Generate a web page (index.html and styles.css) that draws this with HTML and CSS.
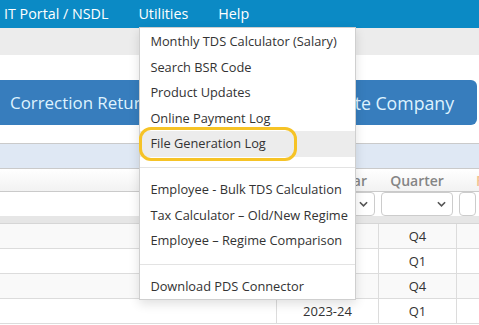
FILE: index.html
```html
<!DOCTYPE html>
<html lang="en">
<head>
<meta charset="utf-8">
<title>TDS Utilities</title>
<link rel="stylesheet" href="styles.css">
</head>
<body>
<nav class="topbar">
  <a class="nav-item brand">IT Portal / NSDL</a>
  <div class="nav-item has-menu">Utilities
    <ul class="dropdown">
      <li class="menu-item">Monthly TDS Calculator (Salary)</li>
      <li class="menu-item">Search BSR Code</li>
      <li class="menu-item">Product Updates</li>
      <li class="menu-item">Online Payment Log</li>
      <li class="menu-item active">File Generation Log<span class="ring"></span></li>
      <li class="divider"></li>
      <li class="menu-item">Employee - Bulk TDS Calculation</li>
      <li class="menu-item">Tax Calculator – Old/New Regime</li>
      <li class="menu-item">Employee – Regime Comparison</li>
      <li class="divider"></li>
      <li class="menu-item">Download PDS Connector</li>
    </ul>
  </div>
  <a class="nav-item">Help</a>
</nav>
<div class="subbar"></div>
<div class="actions">
  <button class="btn btn-left">Correction Return</button>
  <button class="btn btn-right">Create Company</button>
</div>
<section class="panel">
  <div class="panel-head"></div>
  <div class="row head-row">
    <div class="cell"></div>
    <div class="cell year-head">Financial Year</div>
    <div class="cell">Quarter</div>
    <div class="cell accent">Form Type</div>
  </div>
  <div class="row filter-row">
    <div class="cell"></div>
    <div class="cell"><div class="select"><svg class="chev" viewBox="0 0 10 6" width="9" height="6"><path d="M1 1l4 4 4-4" fill="none" stroke="#555" stroke-width="1.8"/></svg></div></div>
    <div class="cell"><div class="select"><svg class="chev" viewBox="0 0 10 6" width="9" height="6"><path d="M1 1l4 4 4-4" fill="none" stroke="#555" stroke-width="1.8"/></svg></div></div>
    <div class="cell"><div class="select"></div></div>
  </div>
  <div class="band"></div>
  <div class="row data alt">
    <div class="cell"></div><div class="cell"></div><div class="cell">Q4</div><div class="cell"></div>
  </div>
  <div class="row data">
    <div class="cell"></div><div class="cell"></div><div class="cell">Q1</div><div class="cell"></div>
  </div>
  <div class="row data alt">
    <div class="cell"></div><div class="cell"></div><div class="cell">Q4</div><div class="cell"></div>
  </div>
  <div class="row data">
    <div class="cell"></div><div class="cell">2023-24</div><div class="cell">Q1</div><div class="cell"></div>
  </div>
</section>
</body>
</html>
```

FILE: styles.css
```css
* { box-sizing: border-box; }
html, body { margin: 0; padding: 0; }
body {
  width: 479px;
  height: 325px;
  overflow: hidden;
  font-family: "Open Sans", "Noto Sans", sans-serif;
  color: #333;
  background: #fff;
}

.topbar {
  height: 28px;
  background: #0b8ac5;
  display: flex;
  align-items: center;
  position: relative;
  z-index: 5;
}
.nav-item {
  color: #fff;
  font-size: 14.3px;
  line-height: 28px;
  padding: 0 15px;
  white-space: nowrap;
}
.nav-item.brand { padding-left: 4px; }
.has-menu { position: relative; }

.dropdown {
  position: absolute;
  top: 27px;
  left: 16px;
  width: 217px;
  margin: 0;
  padding: 1px 0 0;
  list-style: none;
  background: #fff;
  border: 1px solid #cfcfcf;
  box-shadow: 0 4px 10px rgba(0, 0, 0, 0.12);
  color: #333;
}
.menu-item {
  position: relative;
  font-size: 12.8px;
  line-height: 25.6px;
  padding: 0 10px;
  white-space: nowrap;
}
.menu-item.active { background: #ececec; }
.divider {
  height: 1px;
  margin: 10px 0 9px;
  background: #e3e3e3;
}
.ring {
  position: absolute;
  left: -1px;
  top: -4px;
  width: 158px;
  height: 33.5px;
  border: 3.5px solid #f6c326;
  border-radius: 12px;
}

.subbar {
  height: 27px;
  background: #ececec;
}

.actions {
  display: flex;
  height: 45px;
  margin: 25px 2px 0 -10px;
}
.btn {
  border: none;
  border-radius: 6px;
  background: #377dbd;
  color: #def3ff;
  font-family: "Open Sans", "Noto Sans", sans-serif;
  font-size: 17.7px;
  padding: 0 20px;
}
.btn-left { font-size: 16.9px; }
.btn-right {
  margin-left: auto;
  padding-right: 23px;
}

.panel {
  margin-top: 18px;
  border-top: 1px solid #cacaca;
}
.panel-head {
  height: 25px;
  background: #dfe8f4;
  border-bottom: 1px solid #cacaca;
}
.row {
  display: grid;
  grid-template-columns: 276px 102px 78px 1fr;
}
.cell {
  display: flex;
  align-items: center;
  justify-content: center;
  white-space: nowrap;
  overflow: hidden;
}
.head-row {
  height: 23px;
  background: linear-gradient(#ffffff, #f2f2f2);
  border-bottom: 1px solid #cacaca;
  font-size: 14px;
  font-weight: 600;
  color: #858585;
}
.head-row .year-head {
  justify-content: flex-end;
  padding-right: 11px;
  overflow: visible;
}
.head-row .accent {
  color: #f3c291;
  justify-content: flex-start;
  padding-left: 20px;
}
.filter-row { height: 24px; }
.filter-row .cell { padding: 0 3px; }
.select {
  width: 100%;
  height: 24px;
  border: 1px solid #cccccc;
  border-radius: 4px;
  background: #fff;
  display: flex;
  align-items: center;
  justify-content: flex-end;
  padding-right: 6px;
}
.band {
  height: 8px;
  background: #e6e6e6;
  border-bottom: 1px solid #d6d6d6;
}
.data {
  height: 25px;
  border-bottom: 1px solid #dcdcdc;
  font-size: 13px;
  color: #333;
}
.data.alt { background: #f9f9f9; }
.data .cell + .cell { border-left: 1px solid #dcdcdc; }
```
